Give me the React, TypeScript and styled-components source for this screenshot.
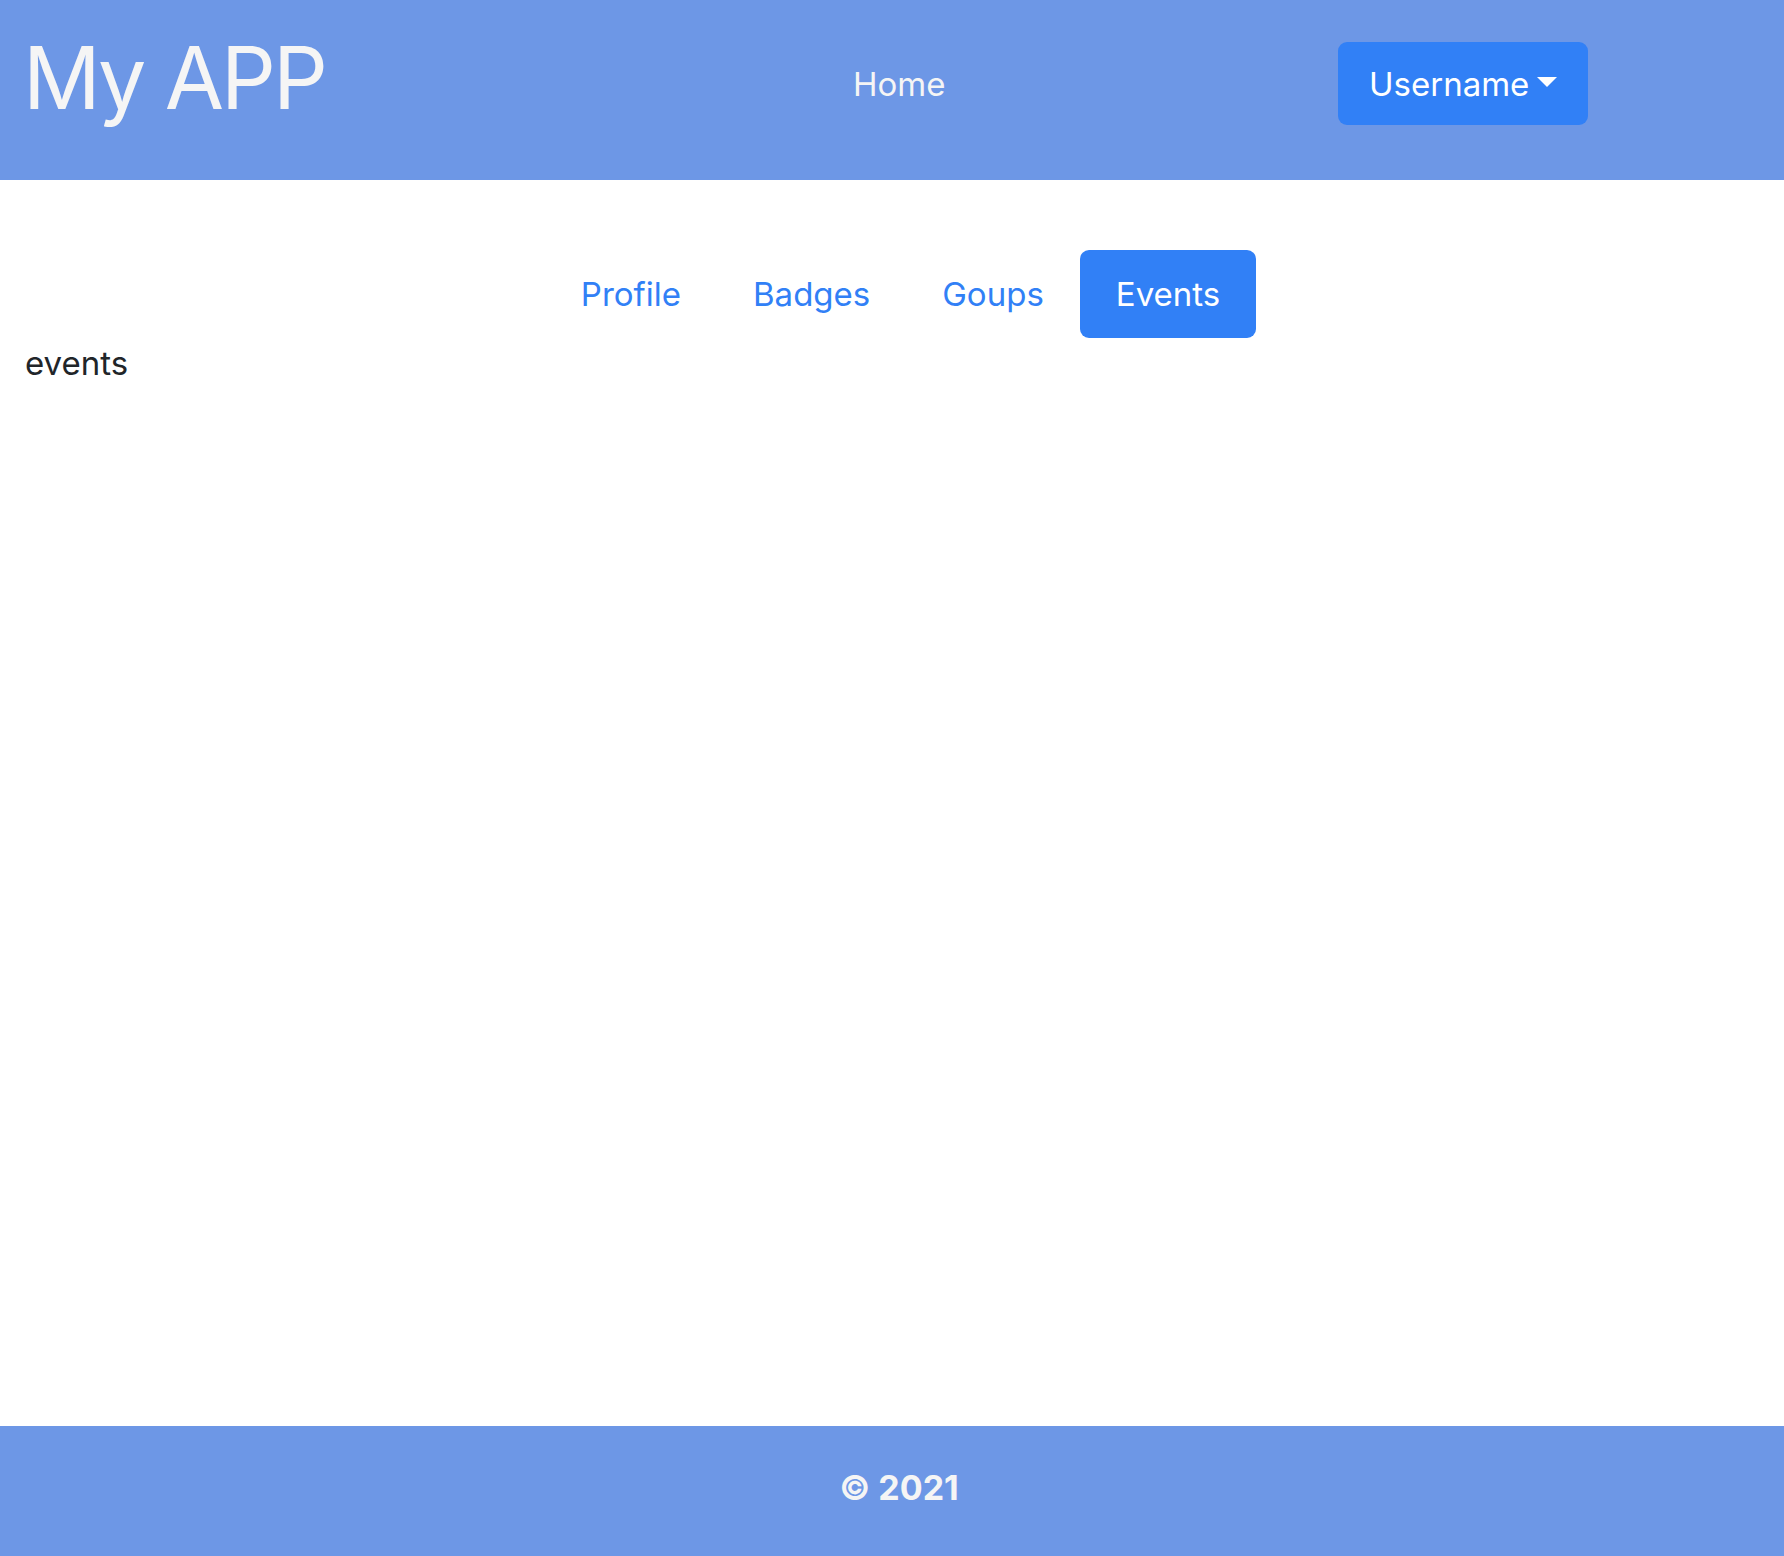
import styled, { createGlobalStyle } from "styled-components";

const GlobalStyle = createGlobalStyle`
  html, body {
    margin: 0;
    padding: 0;
  }
  body {
    font-family: Inter, "Noto Sans", "Liberation Sans", sans-serif;
    color: #212529;
    background: #fff;
  }
`;

const tabs = ["Profile", "Badges", "Goups", "Events"];

export default function App() {
  return (
    <Page>
      <GlobalStyle />
      <Header>
        <Brand>My APP</Brand>
        <HomeLink href="#">Home</HomeLink>
        <UserButton>
          Username
          <Caret />
        </UserButton>
      </Header>
      <Main>
        <Tabs>
          {tabs.map((t) => (
            <Tab key={t} $active={t === "Events"}>
              {t}
            </Tab>
          ))}
        </Tabs>
        <Content>events</Content>
      </Main>
      <Footer>© 2021</Footer>
    </Page>
  );
}

const Page = styled.div`
  display: flex;
  flex-direction: column;
  min-height: 100vh;
`;

const Header = styled.header`
  display: grid;
  grid-template-columns: 853px 485px auto;
  align-items: start;
  height: 180px;
  background-color: #6d97e6;
`;

const Brand = styled.h1`
  margin: 27px 0 0;
  padding-left: 23px;
  font-size: 86px;
  font-weight: 400;
  line-height: 1.2;
  letter-spacing: -3px;
  color: #f5f5f5;
`;

const HomeLink = styled.a`
  margin-top: 59px;
  font-size: 33px;
  line-height: 50px;
  color: #f5f5f5;
  text-decoration: none;
`;

const UserButton = styled.button`
  display: inline-flex;
  align-items: center;
  justify-self: start;
  margin-top: 42px;
  padding: 17px 31px 16px 31px;
  border: none;
  border-radius: 9px;
  background-color: #3180f6;
  color: #fff;
  font-family: inherit;
  font-size: 33px;
  line-height: 50px;
`;

const Caret = styled.span`
  display: inline-block;
  margin-left: 8px;
  margin-top: -4px;
  border-top: 10px solid #fff;
  border-left: 10px solid transparent;
  border-right: 10px solid transparent;
`;

const Main = styled.main`
  flex: 1;
`;

const Tabs = styled.nav`
  display: flex;
  justify-content: center;
  margin-top: 70px;
  padding-left: 17px;
`;

const Tab = styled.a<{ $active?: boolean }>`
  padding: 19px 36px;
  border-radius: 9px;
  font-size: 33px;
  line-height: 50px;
  color: ${(p) => (p.$active ? "#fff" : "#3180f6")};
  background-color: ${(p) => (p.$active ? "#3180f6" : "transparent")};
  text-decoration: none;
`;

const Content = styled.div`
  padding-left: 25px;
  font-size: 33px;
  line-height: 50px;
`;

const Footer = styled.footer`
  display: flex;
  align-items: center;
  justify-content: center;
  height: 123px;
  padding: 0 0 7px 14px;
  background-color: #6d97e6;
  color: #f5f5f5;
  font-size: 34px;
  font-weight: 700;
`;
